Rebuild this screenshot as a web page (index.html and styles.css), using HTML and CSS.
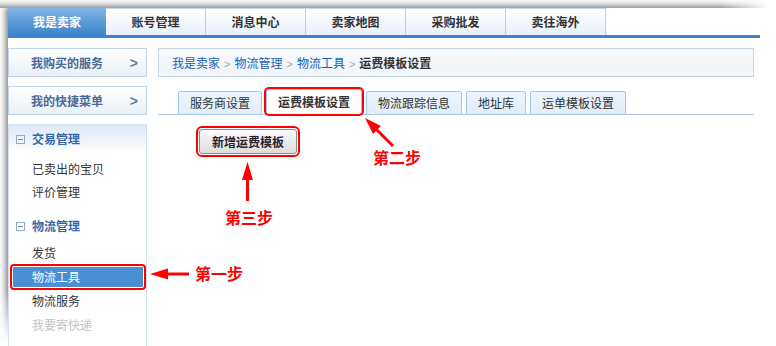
FILE: index.html
```html
<!DOCTYPE html>
<html lang="zh-CN">
<head>
<meta charset="utf-8">
<title>运费模板设置</title>
<link rel="stylesheet" href="styles.css">
</head>
<body>
<div class="frame">
  <ul class="nav">
    <li class="nav-item active">我是卖家</li>
    <li class="nav-item">账号管理</li>
    <li class="nav-item">消息中心</li>
    <li class="nav-item">卖家地图</li>
    <li class="nav-item">采购批发</li>
    <li class="nav-item">卖往海外</li>
  </ul>
  <div class="content">
    <aside class="side">
      <div class="sbox"><span>我购买的服务</span><span class="gt">&gt;</span></div>
      <div class="sbox"><span>我的快捷菜单</span><span class="gt">&gt;</span></div>
      <div class="menu">
        <div class="menu-head band"><span class="fold"></span>交易管理</div>
        <ul class="menu-list">
          <li>已卖出的宝贝</li>
          <li>评价管理</li>
        </ul>
        <div class="menu-head second"><span class="fold"></span>物流管理</div>
        <ul class="menu-list tall">
          <li>发货</li>
          <li class="sel">物流工具</li>
          <li>物流服务</li>
          <li class="faded">我要寄快递</li>
        </ul>
      </div>
    </aside>
    <main class="main">
      <div class="crumb">
        <a class="crumb-link">我是卖家</a><span class="sep">&gt;</span><a class="crumb-link">物流管理</a><span class="sep">&gt;</span><a class="crumb-link">物流工具</a><span class="sep">&gt;</span><strong class="crumb-cur">运费模板设置</strong>
      </div>
      <div class="tabs">
        <span class="tab">服务商设置</span>
        <span class="tab active">运费模板设置</span>
        <span class="tab">物流跟踪信息</span>
        <span class="tab">地址库</span>
        <span class="tab">运单模板设置</span>
      </div>
      <div class="toolbar">
        <button class="btn">新增运费模板</button>
      </div>
    </main>
  </div>
</div>
<svg class="notes" width="776" height="346" viewBox="0 0 776 346">
  <g fill="#f00" stroke="none">
    <polygon points="150,274 168,268.5 168,279.5"/>
    <polygon points="247.5,162 242,180 253,180"/>
    <polygon points="365,118 373.1,133.9 380.9,126.1"/>
  </g>
  <g stroke="#f00" stroke-width="3" fill="none">
    <line x1="166" y1="274" x2="189" y2="274"/>
    <line x1="247.5" y1="178" x2="247.5" y2="201"/>
    <line x1="376" y1="129" x2="393" y2="146"/>
  </g>
  <g class="note-text">
    <text x="195" y="280">第一步</text>
    <text x="373" y="164">第二步</text>
    <text x="225" y="224">第三步</text>
  </g>
</svg>
</body>
</html>
```

FILE: styles.css
```css
* { box-sizing: border-box; }
html, body {
  margin: 0;
  padding: 0;
  width: 776px;
  height: 346px;
  overflow: hidden;
  font-family: "Noto Sans CJK SC", "Liberation Sans", sans-serif;
  font-size: 12px;
  color: #333;
}
body {
  background:
    linear-gradient(to right, rgba(255,255,255,0) 0, rgba(255,255,255,0) 720px, #fff 770px) 0 0 / 776px 8px no-repeat,
    linear-gradient(to bottom, #fbfbfb 0, #e6e6e6 3px, #9c9c9c 8px) 0 0 / 776px 8px no-repeat,
    linear-gradient(to bottom, #fff 0, rgba(255,255,255,0) 12px, rgba(255,255,255,0) 290px, #fff 340px) 0 0 / 8px 346px no-repeat,
    linear-gradient(to right, #fbfbfb 0, #e6e6e6 3px, #9c9c9c 8px) 0 0 / 8px 346px no-repeat,
    #fff;
}
.frame {
  margin: 8px 0 0 8px;
  width: 752px;
  height: 338px;
  background: #fff;
  display: flex;
  flex-direction: column;
}
.nav {
  list-style: none;
  margin: 0;
  padding: 0;
  display: flex;
  height: 30px;
  border-bottom: 3px solid #3d85cb;
}
.nav-item {
  width: 100px;
  height: 27px;
  line-height: 26px;
  text-align: center;
  font-weight: bold;
  color: #333;
  border-top: 1px solid #c3d8ee;
  border-right: 1px solid #b6cfea;
  background: linear-gradient(#ffffff, #e7f0fa);
}
.nav-item.active {
  width: 98px;
  color: #fff;
  border: none;
  line-height: 27px;
  background: linear-gradient(#80b4e6, #3e84cb);
}
.content {
  flex: 1;
  display: flex;
  gap: 11px;
  padding: 10px 6px 0 0;
  min-height: 0;
}
.side {
  width: 139px;
  display: flex;
  flex-direction: column;
}
.sbox {
  height: 29px;
  margin-bottom: 9px;
  border: 1px solid #c3d5ea;
  background: linear-gradient(#ffffff, #eaf0f7);
  display: flex;
  align-items: center;
  justify-content: space-between;
  padding: 0 8px 0 22px;
  font-weight: bold;
  color: #4a6a95;
}
.gt {
  font-family: "Liberation Sans", sans-serif;
  font-size: 14px;
  font-weight: bold;
  color: #5d7ca4;
}
.menu {
  flex: 1;
  border: 1px solid #d3e1ef;
  border-bottom: none;
}
.menu-head {
  height: 28px;
  line-height: 28px;
  padding-left: 7px;
  font-weight: bold;
  color: #3467a9;
  display: flex;
  align-items: center;
}
.menu-head.band {
  background: linear-gradient(#dde8f5, #ffffff);
}
.menu-head.second {
  margin-top: 9px;
}
.fold {
  position: relative;
  width: 9px;
  height: 9px;
  border: 1px solid #91abc8;
  margin-right: 7px;
  flex: none;
}
.fold::after {
  content: "";
  position: absolute;
  left: 1px;
  right: 1px;
  top: 3px;
  height: 1px;
  background: #6f8fb5;
}
.menu-list {
  list-style: none;
  margin: 0;
  padding: 4px 0 0 0;
}
.menu-list li {
  line-height: 23px;
  padding-left: 23px;
  color: #333;
}
.menu-list.tall {
  padding-top: 1px;
}
.menu-list.tall li {
  line-height: 24px;
}
.menu-list li.sel {
  margin: 2px 3px 2px 4px;
  line-height: 20px;
  padding-left: 19px;
  background: #4a8ed4;
  color: #fff;
  border-radius: 1px;
  outline: 2px solid #f00;
  outline-offset: 1px;
}
.menu-list li.faded {
  color: #c4c4c4;
}
.main {
  flex: 1;
  display: flex;
  flex-direction: column;
}
.crumb {
  height: 29px;
  line-height: 27px;
  border: 1px solid #c6d5e3;
  background: linear-gradient(#f7f9fb, #f1f5f8);
  padding-left: 13px;
}
.crumb-link {
  color: #1a5fb4;
}
.sep {
  font-family: "Liberation Sans", sans-serif;
  font-size: 11px;
  color: #a8a8a8;
  margin: 0 4px;
}
.crumb-cur {
  font-weight: bold;
  color: #333;
}
.tabs {
  margin-top: 12px;
  padding-left: 20px;
  display: flex;
  align-items: flex-end;
  gap: 4px;
  border-bottom: 1px solid #a7c5e8;
  height: 26px;
}
.tab {
  height: 23px;
  line-height: 22px;
  padding: 0 11px;
  border: 1px solid #a7c5e8;
  border-bottom: none;
  border-radius: 3px 3px 0 0;
  background: linear-gradient(#eef5fd, #e0edfb);
  color: #333;
}
.tab.active {
  height: 25px;
  line-height: 24px;
  background: #fff;
  font-weight: bold;
  border-color: #a7c5e8;
  outline: 2px solid #f00;
  outline-offset: 0;
  border-radius: 3px;
}
.toolbar {
  padding: 14px 0 0 41px;
}
.btn {
  width: 98px;
  height: 25px;
  padding: 0;
  border: 1px solid #8d8d8d;
  border-radius: 3px;
  background: linear-gradient(#fbfbfb, #dcdcdc);
  font-family: "Noto Sans CJK SC", "Liberation Sans", sans-serif;
  font-size: 12px;
  font-weight: bold;
  color: #2a1f2e;
  outline: 2px solid #f00;
  outline-offset: 1px;
}
.notes {
  position: absolute;
  left: 0;
  top: 0;
  pointer-events: none;
}
.note-text text {
  font-family: "Noto Sans CJK SC", sans-serif;
  font-size: 16px;
  font-weight: bold;
  fill: #f00;
}
```
